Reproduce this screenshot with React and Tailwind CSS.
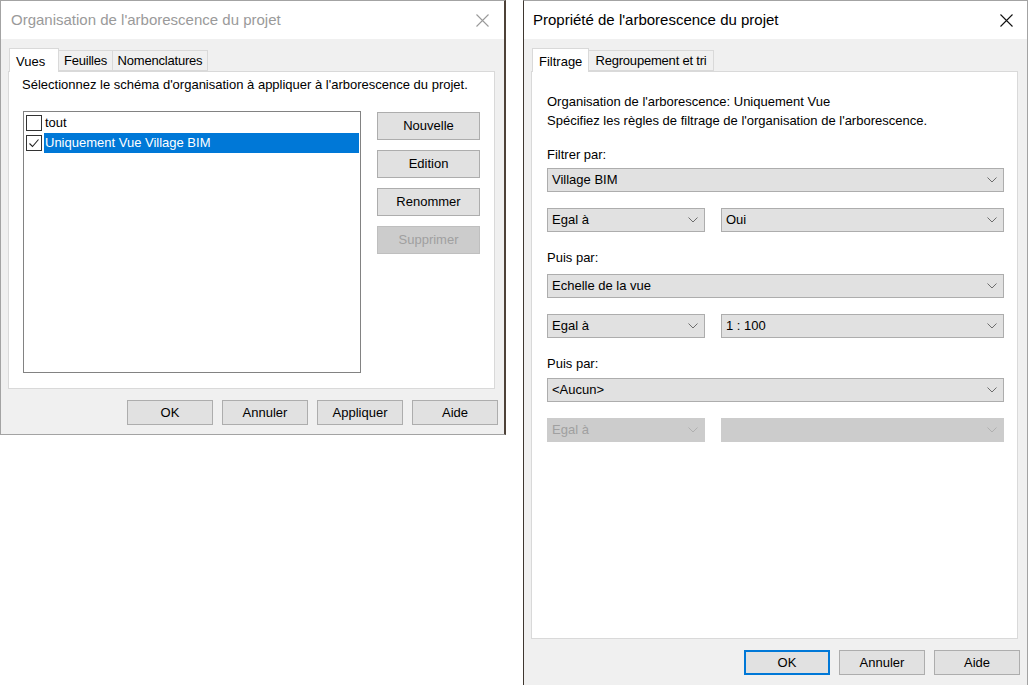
import React from "react";

const font = { fontFamily: "'Liberation Sans', Arial, sans-serif" };

const CloseIcon = ({ color }) => (
  <svg width="13" height="13" viewBox="0 0 13 13" fill="none" stroke={color} strokeWidth="1.1">
    <path d="M0.5 0.5 L12.5 12.5 M12.5 0.5 L0.5 12.5" />
  </svg>
);

const Chevron = ({ color = "#6d6d6d" }) => (
  <svg width="10" height="6" viewBox="0 0 10 6" fill="none" stroke={color} strokeWidth="1">
    <path d="M0.5 0.5 L5 5 L9.5 0.5" />
  </svg>
);

const Button = ({ children, w = "w-[86px]", h = "h-[25px]", disabled, primary }) => (
  <div
    className={`${w} ${h} flex items-center justify-center text-[13px] ${
      disabled
        ? "bg-[#cccccc] border border-[#bfbfbf] text-[#a0a0a0]"
        : primary
        ? "bg-[#e1e1e1] border-2 border-[#0078d7] text-black"
        : "bg-[#e1e1e1] border border-[#adadad] text-black"
    }`}
  >
    {children}
  </div>
);

const Select = ({ value, w, disabled }) => (
  <div
    className={`${w} h-[24px] flex items-center justify-between pl-[4px] pr-[6px] border text-[13px] ${
      disabled
        ? "bg-[#cccccc] border-[#cccccc] text-[#a0a0a0]"
        : "bg-[#e1e1e1] border-[#adadad] text-black"
    }`}
  >
    <span>{value}</span>
    <Chevron color={disabled ? "#b0b0b0" : "#6d6d6d"} />
  </div>
);

const Tab = ({ label, active, w }) =>
  active ? (
    <div
      className={`${w} h-[24px] bg-white border border-b-0 border-[#d9d9d9] -mb-px relative z-10 flex items-start pt-[3px] pl-[6px] text-[13px] text-black`}
    >
      {label}
    </div>
  ) : (
    <div
      className={`${w} h-[21px] bg-[#f0f0f0] border border-[#d9d9d9] border-l-0 flex items-center justify-center text-[13px] tracking-[-0.2px] text-black`}
    >
      {label}
    </div>
  );

const CheckBox = ({ checked }) => (
  <div className="w-[16px] h-[16px] border border-[#333333] bg-white flex items-center justify-center shrink-0">
    {checked && (
      <svg width="14" height="14" viewBox="0 0 14 14" fill="none" stroke="#222" strokeWidth="1.1">
        <path d="M2.5 7.5 L5.5 10.5 L11.5 3.5" />
      </svg>
    )}
  </div>
);

const LeftDialog = () => (
  <div className="w-[506px] h-[435px] shrink-0 flex flex-col bg-[#f0f0f0] border border-[#a3a3a3] border-r-2 border-r-[#4e4238]">
    <div className="h-[38px] bg-white flex items-center justify-between pl-[10px] pr-[15px]">
      <span className="text-[15px] text-[#9a9a9a]">Organisation de l'arborescence du projet</span>
      <CloseIcon color="#9a9a9a" />
    </div>
    <div className="pl-[7px] pt-[9px]">
      <div className="flex items-end pl-px">
        <Tab label="Vues" active w="w-[50px]" />
        <Tab label="Feuilles" w="w-[54px]" />
        <Tab label="Nomenclatures" w="w-[95px]" />
      </div>
      <div className="w-[487px] h-[318px] bg-white border border-[#d9d9d9] pt-[5px] pl-[13px]">
        <div className="leading-[16px] text-[13px] text-black">
          Sélectionnez le schéma d'organisation à appliquer à l'arborescence du projet.
        </div>
        <div className="flex mt-[18px] pl-px">
          <div className="w-[338px] h-[262px] border border-[#828282] pt-px pl-[2px] pr-px">
            <div className="h-[20px] flex items-center gap-[2px]">
              <CheckBox />
              <span className="text-[13px] text-black pl-px">tout</span>
            </div>
            <div className="h-[20px] flex items-center gap-[2px]">
              <CheckBox checked />
              <span className="flex-1 h-[20px] bg-[#0078d7] text-white text-[13px] flex items-center pl-px">
                Uniquement Vue Village BIM
              </span>
            </div>
          </div>
          <div className="ml-[16px] mt-px flex flex-col gap-[10px]">
            <Button w="w-[103px]" h="h-[28px]">Nouvelle</Button>
            <Button w="w-[103px]" h="h-[28px]">Edition</Button>
            <Button w="w-[103px]" h="h-[28px]">Renommer</Button>
            <Button w="w-[103px]" h="h-[28px]" disabled>Supprimer</Button>
          </div>
        </div>
      </div>
    </div>
    <div className="flex justify-end gap-[9px] pr-[6px] mt-[11px]">
      <Button>OK</Button>
      <Button>Annuler</Button>
      <Button>Appliquer</Button>
      <Button>Aide</Button>
    </div>
  </div>
);

const Label = ({ children, mt }) => (
  <div className={`${mt} leading-[16px] text-[13px] text-black`}>{children}</div>
);

const RightDialog = () => (
  <div className="ml-[17px] w-[505px] h-[686px] shrink-0 flex flex-col bg-[#f0f0f0] border border-[#a3a3a3] border-l-[#3f3730] border-b-0">
    <div className="h-[38px] bg-white flex items-center justify-between pl-[9px] pr-[14px]">
      <span className="text-[15px] text-black">Propriété de l'arborescence du projet</span>
      <CloseIcon color="#111" />
    </div>
    <div className="pl-[7px] pt-[9px]">
      <div className="flex items-end pl-px">
        <Tab label="Filtrage" active w="w-[57px]" />
        <Tab label="Regroupement et tri" w="w-[125px]" />
      </div>
      <div className="w-[487px] h-[568px] bg-white border border-[#d9d9d9] pl-[15px] pt-[22px]">
        <Label mt="mt-0">Organisation de l'arborescence: Uniquement Vue</Label>
        <Label mt="mt-[3px]">Spécifiez les règles de filtrage de l'organisation de l'arborescence.</Label>

        <Label mt="mt-[18px]">Filtrer par:</Label>
        <div className="mt-[5px]">
          <Select w="w-[457px]" value="Village BIM" />
        </div>
        <div className="mt-[16px] flex gap-[16px]">
          <Select w="w-[158px]" value="Egal à" />
          <Select w="w-[283px]" value="Oui" />
        </div>

        <Label mt="mt-[18px]">Puis par:</Label>
        <div className="mt-[8px]">
          <Select w="w-[457px]" value="Echelle de la vue" />
        </div>
        <div className="mt-[16px] flex gap-[16px]">
          <Select w="w-[158px]" value="Egal à" />
          <Select w="w-[283px]" value="1 : 100" />
        </div>

        <Label mt="mt-[18px]">Puis par:</Label>
        <div className="mt-[6px]">
          <Select w="w-[457px]" value="<Aucun>" />
        </div>
        <div className="mt-[16px] flex gap-[16px]">
          <Select w="w-[158px]" value="Egal à" disabled />
          <Select w="w-[283px]" value="" disabled />
        </div>
      </div>
    </div>
    <div className="flex justify-end gap-[9px] pr-[7px] mt-[11px]">
      <Button primary>OK</Button>
      <Button>Annuler</Button>
      <Button>Aide</Button>
    </div>
  </div>
);

export default function App() {
  return (
    <div style={font} className="w-[1028px] h-[685px] bg-white flex items-start overflow-hidden">
      <LeftDialog />
      <RightDialog />
    </div>
  );
}
